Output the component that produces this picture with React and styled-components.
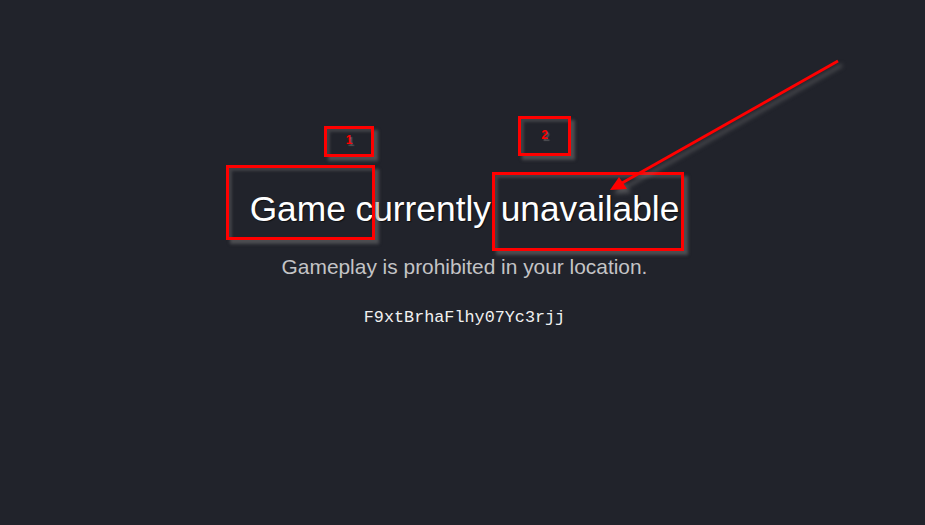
import React from 'react'
import styled, { createGlobalStyle } from 'styled-components'

const GlobalStyle = createGlobalStyle`
    html, body{
        margin: 0;
        padding: 0;
        background: #21232b;
    }
    body{
        font-family: "Liberation Sans", Arial, sans-serif;
    }
`

const Page = styled.div`
    position: relative;
    width: 925px;
    height: 525px;
    overflow: hidden;
    background: #21232b;
`

const Content = styled.main`
    display: flex;
    flex-direction: column;
    align-items: center;
    padding-top: 186px;
    padding-left: 4px;
`

const Title = styled.h1`
    margin: 0;
    font-size: 35.3px;
    font-weight: 400;
    line-height: 46px;
    color: #ffffff;
    text-shadow: 1px 1px 1px rgba(0,0,0,0.6);
`

const Subtitle = styled.p`
    margin: 23px 0 0;
    font-size: 20.9px;
    line-height: 24px;
    color: #c4c4c6;
`

const Code = styled.code`
    margin-top: 29px;
    font-family: "Liberation Mono", "Courier New", monospace;
    font-size: 16.8px;
    line-height: 20px;
    color: #f0f0f0;
`

const Mark = styled.div`
    position: absolute;
    left: ${p => p.x}px;
    top: ${p => p.y}px;
    width: ${p => p.w}px;
    height: ${p => p.h}px;
    box-sizing: border-box;
    border: 3px solid #ff0000;
    box-shadow: 4px 4px 3px rgba(120,120,120,0.5), inset 3px 3px 3px rgba(120,120,120,0.35);
    display: flex;
    align-items: center;
    justify-content: center;
    pointer-events: none;
`

const Num = styled.span`
    font-size: 12px;
    font-weight: 700;
    color: #ff0000;
    text-shadow: 2px 2px 1px rgba(130,130,130,0.5);
    margin-top: -3px;
`

const Arrow = styled.svg`
    position: absolute;
    left: 0;
    top: 0;
    pointer-events: none;
    filter: drop-shadow(4px 4px 2px rgba(120,120,120,0.55));
`

export default function App(){
    return (
        <>
            <GlobalStyle/>
            <Page>
                <Content>
                    <Title>Game currently unavailable</Title>
                    <Subtitle>Gameplay is prohibited in your location.</Subtitle>
                    <Code>F9xtBrhaFlhy07Yc3rjj</Code>
                </Content>

                <Mark x={324} y={126} w={50} h={31}><Num>1</Num></Mark>
                <Mark x={518} y={116} w={53} h={40}><Num>2</Num></Mark>
                <Mark x={226} y={165} w={149} h={75}/>
                <Mark x={492} y={172} w={192} h={79}/>

                <Arrow width="925" height="525" viewBox="0 0 925 525">
                    <line x1="838" y1="61" x2="622" y2="183" stroke="#ff0000" strokeWidth="3"/>
                    <polygon points="610,190 619,177 627,189" fill="#ff0000"/>
                </Arrow>
            </Page>
        </>
    )
}
